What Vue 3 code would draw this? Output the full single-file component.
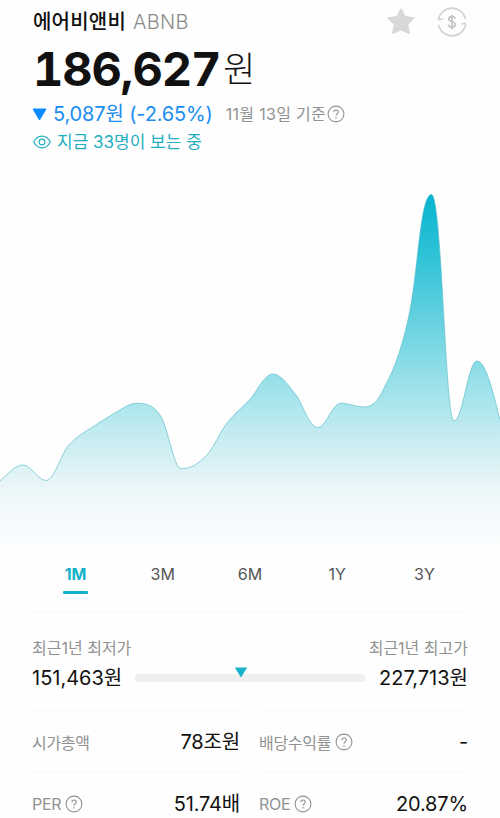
<script setup>
import { ref } from "vue";

const periods = ["1M", "3M", "6M", "1Y", "3Y"];
const activePeriod = ref("1M");

const stats = [
  { label: "시가총액", value: "78조원", help: false },
  { label: "배당수익률", value: "-", help: true },
  { label: "PER", value: "51.74배", help: true },
  { label: "ROE", value: "20.87%", help: true },
];

// 최저가와 최고가 사이의 현재가 위치 (%)
const pricePosition = 46;

const line =
  "M0 481 C8 474 15 465 23 465 C31 465 38 480.5 46 480.5 C54 480.5 61 455 68 446 " +
  "C75 438 83 433 91 428 C99 423 106 418 114 413.5 C122 409 129 403.3 137 403.3 " +
  "C146 402.8 154 406 160 415 C167 425 173 462 179 467.5 C180.5 469 182 468.5 184 468.5 " +
  "C192 468.5 200 462 207 455 C214 447 220 432 227 423 C235 413 243 407 250 399 " +
  "C257 392 264 374 273 374 C281 374 289 386 296 395 C303 404 309 427.5 318 427.5 " +
  "C326 427.5 332 403.3 341 403.3 C349 403.3 356 407 364 407 C375 407 380 397 386 384 " +
  "C395 368 403 344 409 315 C418 273 420 194.5 431.5 194.5 C442 194.5 445 421 454 421 " +
  "C463 421 468 361 477 361 C485 361 492 387 500 420";
const area = line + " V556 H0 Z";
</script>

<template>
  <div class="stock-page">
    <header class="summary">
      <div class="title-row">
        <span class="name">에어비앤비</span>
        <span class="ticker">ABNB</span>
        <div class="actions">
          <svg class="star" width="30" height="30" viewBox="0 0 30 30">
            <path
              d="M15 2.2 L18.9 9.7 L27.7 10.9 L21.5 17.1 L23.2 26.2 L15 22.6 L6.8 26.2 L8.5 17.1 L2.3 10.9 L11.1 9.7 Z"
            />
          </svg>
          <svg class="exchange" width="30" height="30" viewBox="0 0 30 30">
            <path d="M1.3 13 A13.8 13.8 0 0 1 28.5 12.2" />
            <path d="M28.7 17 A13.8 13.8 0 0 1 1.5 17.8" />
            <path d="M1.3 13 L5.7 11.7 M28.7 16 L24.4 17.3" />
            <path
              class="dollar"
              d="M18.2 11.8 C17.7 10.3 16.6 9.7 15 9.7 C13.1 9.7 11.8 10.6 11.8 12.1 C11.8 15.7 18.4 13.8 18.4 17.5 C18.4 19.2 17 20.2 15 20.2 C13.1 20.2 11.8 19.3 11.5 17.7 M15 7.7 V22.3"
            />
          </svg>
        </div>
      </div>

      <div class="price-row">
        <span class="price">186,627</span>
        <span class="unit">원</span>
      </div>

      <div class="change-row">
        <svg class="down" width="15" height="13" viewBox="0 0 15 13">
          <path d="M1 1 H14 L7.5 12 Z" />
        </svg>
        <span class="change">5,087원 (-2.65%)</span>
        <span class="base-date">11월 13일 기준</span>
        <svg class="help" width="18" height="18" viewBox="0 0 18 18">
          <circle cx="9" cy="9" r="7.9" />
          <path d="M6.8 7.2 C6.8 4.3 11.3 4.4 11.3 7 C11.3 8.7 9 8.8 9 10.7" />
          <circle class="dot" cx="9" cy="12.8" r="0.8" />
        </svg>
      </div>

      <div class="viewers-row">
        <svg class="eye" width="18" height="14" viewBox="0 0 18 14">
          <path d="M0.7 7 C4.6 -0.8 13.4 -0.8 17.3 7 C13.4 14.8 4.6 14.8 0.7 7 Z" />
          <circle cx="9" cy="7" r="2.9" />
        </svg>
        <span>지금 33명이 보는 중</span>
      </div>
    </header>

    <svg class="chart" width="500" height="376" viewBox="0 180 500 376">
      <defs>
        <linearGradient id="fill" gradientUnits="userSpaceOnUse" x1="0" y1="194" x2="0" y2="556">
          <stop offset="0" stop-color="#06b4cf" />
          <stop offset="0.18" stop-color="#32c3d7" />
          <stop offset="0.4" stop-color="#76d6e3" />
          <stop offset="0.57" stop-color="#a8e5ec" />
          <stop offset="0.68" stop-color="#c8edf2" />
          <stop offset="0.75" stop-color="#daf2f5" />
          <stop offset="0.8" stop-color="#e8f5f8" />
          <stop offset="0.86" stop-color="#f2f9fb" />
          <stop offset="0.94" stop-color="#f9fcfe" />
          <stop offset="1" stop-color="#fefefe" />
        </linearGradient>
      </defs>
      <path :d="area" fill="url(#fill)" />
      <path class="chart-line" :d="line" />
    </svg>

    <nav class="periods">
      <button
        v-for="period in periods"
        :key="period"
        class="period"
        :class="{ active: period === activePeriod }"
        @click="activePeriod = period"
      >
        {{ period }}
      </button>
    </nav>

    <section class="range">
      <div class="range-labels">
        <span>최근1년 최저가</span>
        <span>최근1년 최고가</span>
      </div>
      <div class="range-values">
        <span class="value">151,463원</span>
        <div class="track">
          <svg
            class="marker"
            :style="{ left: pricePosition + '%' }"
            width="13"
            height="11"
            viewBox="0 0 13 11"
          >
            <path d="M0.3 0.4 H12.7 L6.5 10.6 Z" />
          </svg>
        </div>
        <span class="value">227,713원</span>
      </div>
    </section>

    <section class="stats">
      <div v-for="stat in stats" :key="stat.label" class="stat">
        <span class="stat-label">{{ stat.label }}</span>
        <svg v-if="stat.help" class="help" width="18" height="18" viewBox="0 0 18 18">
          <circle cx="9" cy="9" r="7.9" />
          <path d="M6.8 7.2 C6.8 4.3 11.3 4.4 11.3 7 C11.3 8.7 9 8.8 9 10.7" />
          <circle class="dot" cx="9" cy="12.8" r="0.8" />
        </svg>
        <span class="value">{{ stat.value }}</span>
      </div>
    </section>
  </div>
</template>

<style>
body {
  margin: 0;
  background: #fefefe;
}
</style>

<style scoped>
.stock-page {
  width: 500px;
  height: 818px;
  overflow: hidden;
  background: #fefefe;
  color: #111;
  font-family: Inter, "Noto Sans CJK KR", sans-serif;
}

.summary {
  height: 180px;
  padding: 0 33px;
  box-sizing: border-box;
}

.title-row,
.price-row,
.change-row,
.viewers-row {
  display: flex;
  align-items: center;
  white-space: nowrap;
}

.title-row {
  height: 44px;
  font-size: 20px;
  line-height: 46px;
}

.name {
  font-weight: 500;
  letter-spacing: 0.2px;
}

.ticker {
  margin-left: 7px;
  color: #8b8b8b;
  font-weight: 300;
  letter-spacing: 0.3px;
}

.actions {
  display: flex;
  gap: 21px;
  margin-left: auto;
}

.star {
  fill: #d8d8d8;
  stroke: #d8d8d8;
  stroke-width: 1.5;
  stroke-linejoin: round;
}

.exchange {
  fill: none;
  stroke: #d2d2d2;
  stroke-width: 1.6;
}

.dollar {
  stroke: #c4c4c4;
  stroke-width: 1.8;
}

.price-row {
  height: 50px;
  padding-bottom: 2px;
  line-height: 48px;
}

.price {
  font-size: 47px;
  font-weight: 700;
  font-variant-numeric: tabular-nums;
  letter-spacing: -1.1px;
}

.unit {
  margin-left: 3px;
  font-size: 35px;
  font-weight: 300;
}

.change-row {
  height: 36px;
  line-height: 36px;
}

.down {
  margin-left: -1px;
  fill: #0c8cff;
  stroke: #0c8cff;
  stroke-linejoin: round;
}

.change {
  margin-left: 6px;
  color: #1a8df0;
  font-size: 20px;
  letter-spacing: -0.15px;
}

.base-date {
  margin-left: 13px;
  margin-right: 1px;
  color: #929292;
  font-size: 16px;
  letter-spacing: 0.3px;
}

.help {
  flex: none;
  fill: none;
  stroke: #949494;
  stroke-width: 1.1;
}

.help .dot {
  fill: #949494;
  stroke: none;
}

.viewers-row {
  height: 20px;
  line-height: 20px;
  color: #1eafc0;
  font-size: 17px;
}

.eye {
  margin-right: 6px;
  fill: none;
  stroke: #1eafc0;
  stroke-width: 1.1;
}

.chart {
  display: block;
}

.chart-line {
  fill: none;
  stroke: #55bac6;
  stroke-opacity: 0.8;
  stroke-width: 0.8;
}

.periods {
  display: grid;
  grid-template-columns: repeat(5, 1fr);
  height: 55px;
  margin: 0 32px;
  border-bottom: 1px solid #f6f6f6;
}

.period {
  display: flex;
  flex-direction: column;
  align-items: center;
  padding: 1px 0 0;
  border: 0;
  background: none;
  color: #555;
  font-family: inherit;
  font-size: 16px;
  font-weight: 400;
  line-height: 34px;
}

.period.active {
  color: #14b1ca;
  font-weight: 700;
}

.period.active::after {
  content: "";
  width: 25px;
  height: 3px;
  border-radius: 1px;
  background: #14b1ca;
}

.range {
  height: 98px;
  margin: 0 32px;
  box-sizing: border-box;
  padding-top: 23px;
}

.range-labels {
  display: flex;
  justify-content: space-between;
  height: 26px;
  color: #929292;
  font-size: 16px;
  line-height: 26px;
}

.range-values {
  display: flex;
  align-items: center;
  height: 33px;
}

.value {
  font-size: 20px;
  line-height: 34px;
  white-space: nowrap;
}

.track {
  position: relative;
  flex: 1;
  height: 8px;
  margin: 0 14px 0 13px;
  border-radius: 4px;
  background: #efefef;
}

.marker {
  position: absolute;
  top: -7px;
  transform: translateX(-50%);
  fill: #16b3cb;
}

.stats {
  display: grid;
  grid-template-columns: 208px 209px;
  grid-auto-rows: 62px;
  column-gap: 19px;
  margin: 0 32px;
}

.stat {
  display: flex;
  align-items: center;
  border-top: 1px solid #f6f6f6;
}

.stat-label {
  color: #929292;
  font-size: 16px;
  letter-spacing: -0.3px;
}

.stat .help {
  margin-left: 4px;
}

.stat .value {
  margin-left: auto;
  letter-spacing: -0.15px;
}
</style>
